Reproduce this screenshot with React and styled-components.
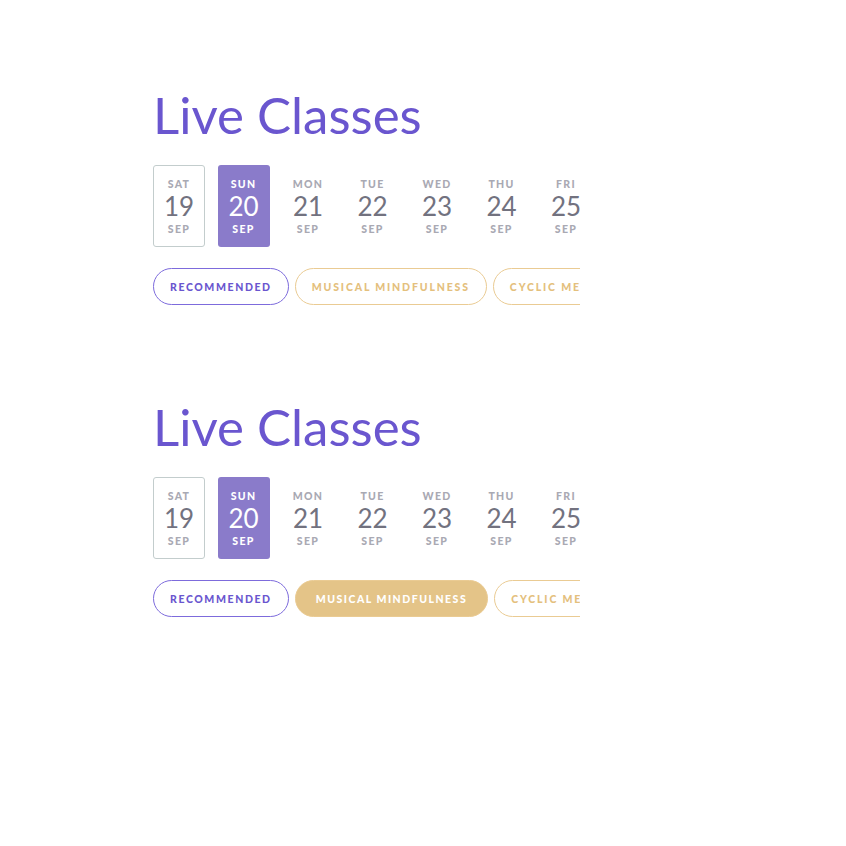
import React from 'react';
import styled, { createGlobalStyle } from 'styled-components';

const GlobalStyle = createGlobalStyle`
  body {
    margin: 0;
    background: #fff;
    font-family: 'Lato', 'Open Sans', sans-serif;
  }
`;

const days = [
  { day: 'SAT', date: 19 },
  { day: 'SUN', date: 20 },
  { day: 'MON', date: 21 },
  { day: 'TUE', date: 22 },
  { day: 'WED', date: 23 },
  { day: 'THU', date: 24 },
  { day: 'FRI', date: 25 },
];

const categories = [
  { label: 'RECOMMENDED', kind: 'purple' },
  { label: 'MUSICAL MINDFULNESS', kind: 'gold' },
  { label: 'CYCLIC MEDITATION', kind: 'gold' },
];

const Page = styled.div`
  padding: 82px 0 0 153px;
  display: flex;
  flex-direction: column;
  gap: 89px;
`;

const Section = styled.section`
  width: 427px;
`;

const Title = styled.h1`
  margin: 0 0 17px;
  font-family: 'Lato', sans-serif;
  font-weight: 400;
  font-size: 51px;
  line-height: 66px;
  color: #6a56cf;
`;

const DateRow = styled.div`
  display: flex;
  gap: 12.5px;
`;

const DateCell = styled.div`
  flex: 0 0 52px;
  height: 82px;
  box-sizing: border-box;
  border-radius: 3px;
  display: flex;
  flex-direction: column;
  align-items: center;
  justify-content: center;
  border: 1.5px solid ${p => (p.$today ? '#c3cdcd' : 'transparent')};
  background: ${p => (p.$selected ? '#8a7bca' : 'transparent')};
  color: ${p => (p.$selected ? '#fff' : '#a9a9b3')};
`;

const DayLabel = styled.span`
  font-size: 10.5px;
  font-weight: 900;
  letter-spacing: 1.3px;
  line-height: 14px;
`;

const DateNum = styled.span`
  font-size: 26px;
  font-weight: 400;
  line-height: 31px;
  color: ${p => (p.$selected ? '#fff' : '#72727f')};
`;

const PillRow = styled.div`
  display: flex;
  gap: 6px;
  margin-top: 21px;
  overflow: hidden;
`;

const Pill = styled.div`
  flex: 0 0 auto;
  height: 37px;
  box-sizing: border-box;
  border-radius: 19px;
  display: flex;
  align-items: center;
  font-size: 10.5px;
  font-weight: 900;
  white-space: nowrap;
  border: 1.5px solid ${p => (p.$kind === 'purple' ? '#7d6bdc' : '#eacb93')};
  color: ${p =>
    p.$active ? '#fff' : p.$kind === 'purple' ? '#6a56cf' : '#e4c07d'};
  background: ${p => (p.$active ? '#e4c488' : 'transparent')};
  letter-spacing: ${p =>
    p.$active ? '1.5px' : p.$kind === 'purple' ? '1.6px' : '1.85px'};
  padding: ${p => (p.$active ? '0 20px' : '0 16px')};
`;

const LiveClasses = ({ activeCategory }) => (
  <Section>
    <Title>Live Classes</Title>
    <DateRow>
      {days.map((d, i) => (
        <DateCell key={i} $today={i === 0} $selected={i === 1}>
          <DayLabel>{d.day}</DayLabel>
          <DateNum $selected={i === 1}>{d.date}</DateNum>
          <DayLabel>SEP</DayLabel>
        </DateCell>
      ))}
    </DateRow>
    <PillRow>
      {categories.map((c, i) => (
        <Pill key={c.label} $kind={c.kind} $active={i === activeCategory}>
          {c.label}
        </Pill>
      ))}
    </PillRow>
  </Section>
);

export default function App() {
  return (
    <>
      <GlobalStyle />
      <Page>
        <LiveClasses activeCategory={-1} />
        <LiveClasses activeCategory={1} />
      </Page>
    </>
  );
}
